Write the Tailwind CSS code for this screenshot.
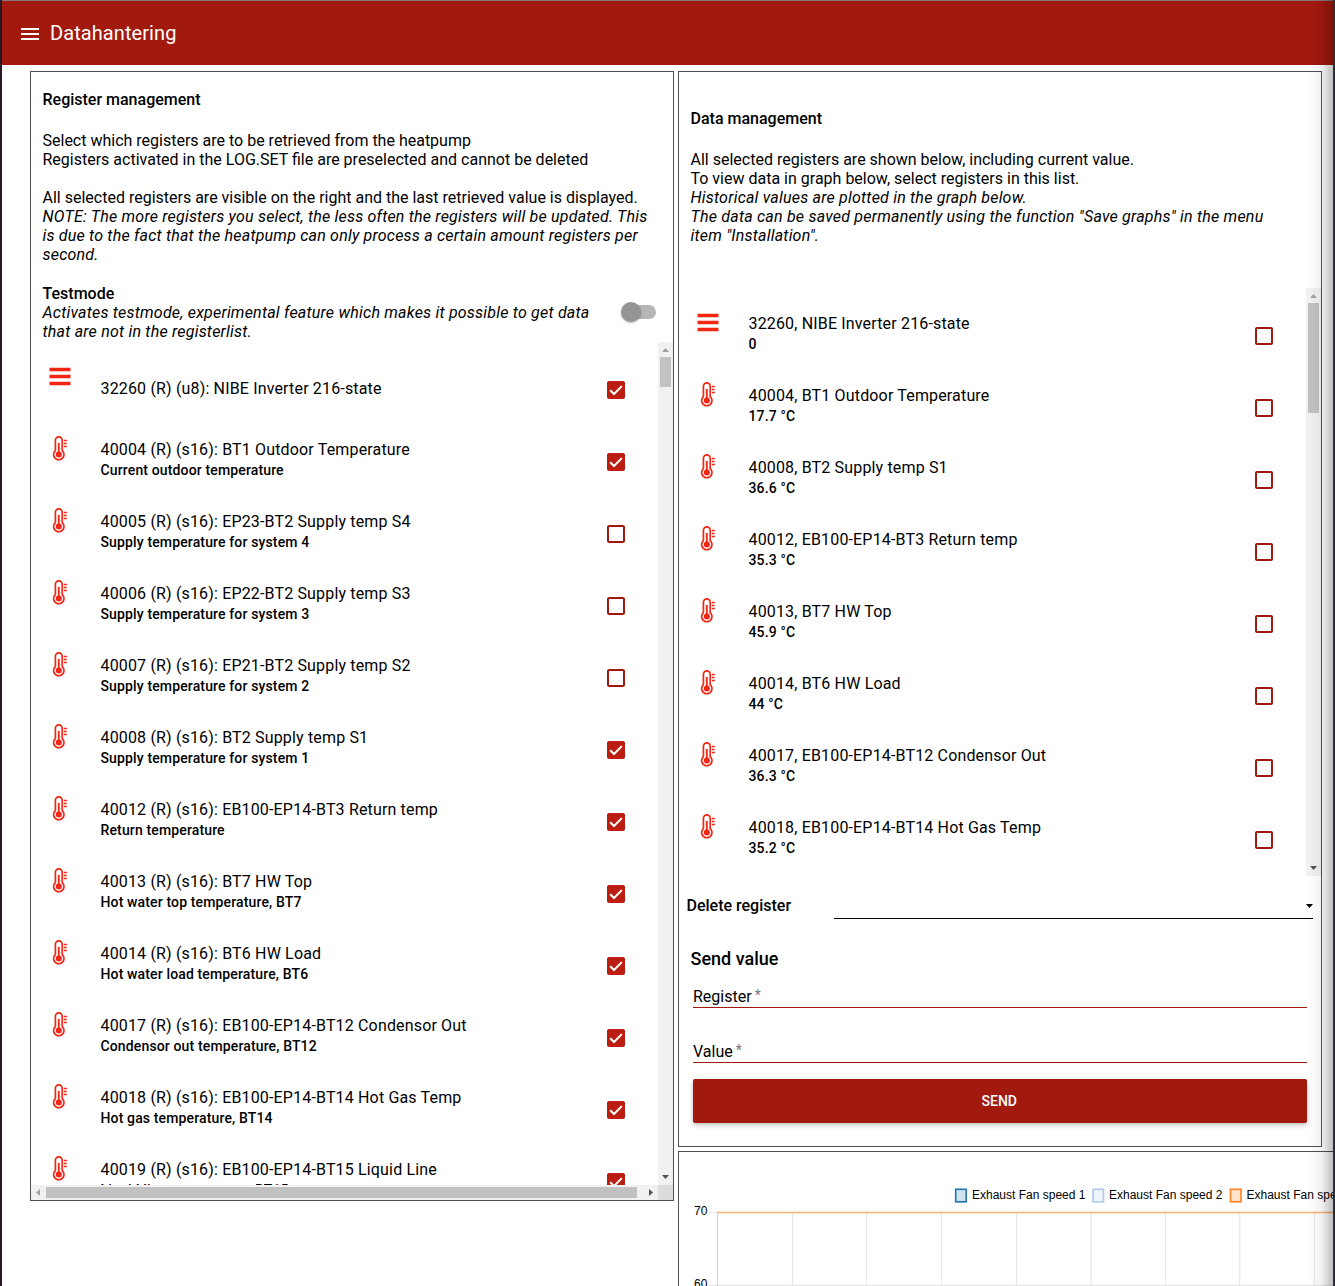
<!DOCTYPE html>
<html lang="sv">
<head>
<meta charset="utf-8">
<title>Datahantering</title>
<script src="https://cdn.jsdelivr.net/npm/@tailwindcss/browser@4"></script>
</head>
<body class="bg-white">
<svg class="hidden">
  <symbol id="bars" viewBox="0 0 24 24"><path fill="#f22613" d="M1.500 3.700h21v3.500h-21zM1.500 10.700h21v3.500h-21zM1.500 17.700h21v3.500h-21z"/></symbol>
  <symbol id="thermo" viewBox="0 0 24 25">
    <path fill="none" stroke="#f22613" stroke-width="1.700" d="M7.400 14.600V4.200a3.400 3.400 0 0 1 6.800 0V14.600a5.200 5.200 0 1 1-6.800 0z"/>
    <path stroke="#f22613" stroke-width="1.800" d="M10.800 7v11"/>
    <circle cx="10.800" cy="18.600" r="3" fill="#f22613"/>
    <path stroke="#f22613" stroke-width="1.300" d="M15.900 4.500h3M15.900 7.500h2.700M15.900 10.500h3"/>
  </symbol>
</svg>
<div class="relative flex h-[1286px] w-[1335px] flex-col overflow-hidden border-r-2 border-l-2 border-r-[#2e2d35] border-l-[#2c1524] bg-white font-['Roboto',sans-serif] text-base leading-[19px] text-black">
  <header class="flex h-[65px] shrink-0 items-center border-t border-[#84757a] bg-[#a2190e] pl-[19px] text-white">
    <svg class="mt-[2px] h-[12px] w-[18px]" viewBox="0 0 18 12"><path fill="#fff" d="M0 0h18v2H0zM0 5h18v2H0zM0 10h18v2H0z"/></svg>
    <h1 class="ml-[11px] text-[20px] leading-6 tracking-[0.08px]">Datahantering</h1>
  </header>

  <main class="flex w-[1400px] items-start gap-1 pt-[6px] pl-[28px]">
    <section class="flex h-[1130px] w-[644px] shrink-0 flex-col border border-[#505050]">
      <div class="h-[270px] shrink-0 pt-[18px] pl-[11.5px]">
        <h2 class="font-medium">Register management</h2>
        <p class="mt-[22px] whitespace-nowrap">Select which registers are to be retrieved from the heatpump<br>Registers activated in the LOG.SET file are preselected and cannot be deleted<br><br>All selected registers are visible on the right and the last retrieved value is displayed.<br><em class="tracking-[0.2px]">NOTE: The more registers you select, the less often the registers will be updated. This<br>is due to the fact that the heatpump can only process a certain amount registers per<br>second.</em></p>
        <div class="mt-5 flex">
          <div class="w-[578.5px] whitespace-nowrap"><h2 class="font-medium">Testmode</h2><p class="tracking-[0.21px] italic">Activates testmode, experimental feature which makes it possible to get data<br>that are not in the registerlist.</p></div>
          <div class="mt-[18px] flex h-5 w-[36px] items-center">
            <div class="z-10 size-5 shrink-0 rounded-full bg-[#949494] shadow-[0_1px_2px_rgba(0,0,0,0.3)]"></div>
            <div class="-ml-[17px] h-[14px] w-[32px] rounded-full bg-[#b6b6b6]"></div>
          </div>
        </div>
      </div>
      <div class="flex h-[843px] shrink-0">
        <div id="registers" class="w-[627px] overflow-hidden pt-3"></div>
        <div class="flex w-[15px] flex-col items-center bg-[#f1f1f1]">
          <svg class="size-[15px] shrink-0" viewBox="0 0 15 15"><path fill="#a3a3a3" d="M4 10h7L7.5 6z"/></svg>
          <div class="h-[30px] w-[11px] bg-[#c1c1c1]"></div>
          <svg class="mt-auto size-[15px] shrink-0" viewBox="0 0 15 15"><path fill="#505050" d="M4 5h7L7.5 9z"/></svg>
        </div>
      </div>
      <div class="flex h-[15px] items-center bg-[#f1f1f1]">
        <svg class="size-[15px] shrink-0" viewBox="0 0 15 15"><path fill="#a3a3a3" d="M9 4v7L5 7.5z"/></svg>
        <div class="h-[11px] w-[591px] bg-[#c1c1c1]"></div>
        <svg class="ml-[6px] size-[15px] shrink-0" viewBox="0 0 15 15"><path fill="#505050" d="M6 4v7l4-3.500z"/></svg>
        <div class="size-[15px] bg-[#dcdcdc]"></div>
      </div>
    </section>

    <div class="flex flex-col gap-1">
      <section class="h-[1076px] w-[644px] border border-[#505050]">
        <div class="h-[216px] pt-[37px] pl-[11.5px] whitespace-nowrap">
          <h2 class="font-medium">Data management</h2>
          <p class="mt-[22px]">All selected registers are shown below, including current value.<br>To view data in graph below, select registers in this list.<br><em class="tracking-[0.21px]">Historical values are plotted in the graph below.<br>The data can be saved permanently using the function "Save graphs" in the menu<br>item "Installation".</em></p>
        </div>
        <div class="flex h-[588px]">
          <div id="values" class="w-[627px] overflow-hidden pt-3"></div>
          <div class="flex w-[15px] flex-col items-center bg-[#f1f1f1]">
            <svg class="size-[15px] shrink-0" viewBox="0 0 15 15"><path fill="#a3a3a3" d="M4 10h7L7.5 6z"/></svg>
            <div class="h-[110px] w-[11px] bg-[#c1c1c1]"></div>
            <svg class="mt-auto size-[15px] shrink-0" viewBox="0 0 15 15"><path fill="#505050" d="M4 5h7L7.5 9z"/></svg>
          </div>
        </div>
        <div class="flex h-[43px] pt-5 pl-[7.5px]">
          <h2 class="w-[147.5px] font-medium">Delete register</h2>
          <div class="flex h-[23px] w-[479px] justify-end border-b border-black">
            <svg class="mt-[8px] h-1 w-[7px]" viewBox="0 0 7 4"><path d="M0 0h7L3.500 4z"/></svg>
          </div>
        </div>
        <div class="w-[628px] pt-[29px] pl-[14px]">
          <h2 class="-ml-[2.5px] text-[18px] leading-[21px] font-medium">Send value</h2>
          <div class="mt-[18px] flex h-[21px] border-b border-[#a2190e]">Register<span class="ml-[3px] text-sm leading-[17px] text-[#777]">*</span></div>
          <div class="mt-[34px] flex h-[21px] border-b border-[#a2190e]">Value<span class="ml-[3px] text-sm leading-[17px] text-[#777]">*</span></div>
          <button class="mt-4 flex h-11 w-full items-center justify-center rounded-[2px] bg-[#a2190e] pr-[1.5px] text-sm font-medium text-white shadow-[0_2px_5px_rgba(0,0,0,0.26)]">SEND</button>
        </div>
      </section>
      <section class="h-[200px] w-[720px] border border-[#505050]">
        <svg class="block h-[190px] w-[718px] font-['Liberation_Sans',sans-serif] text-xs" viewBox="679 1152 718 190">
          <path stroke="#e9e9e9" stroke-width="1.3" d="M709 1212.500h9M709 1285.500h688M792.500 1212v90M866.500 1212v90M941.500 1212v90M1016.500 1212v90M1091 1212v90M1165.500 1212v90M1239.700 1212v90M1314.500 1212v90"/>
          <path stroke="#d6d6d6" stroke-width="1.3" d="M717.500 1212v90"/>
          <path stroke="#fdb076" stroke-width="1.6" d="M717 1212.500h680"/>
          <text x="694" y="1215">70</text><text x="694" y="1288">60</text>
          <rect x="955.700" y="1189.300" width="10.500" height="12.500" fill="#d2e4f0" stroke="#2b79b3" stroke-width="1.7"/>
          <rect x="1093" y="1189.300" width="10.500" height="12.500" fill="#eff4fb" stroke="#b3c9e8" stroke-width="1.7"/>
          <rect x="1230.500" y="1189.300" width="10.500" height="12.500" fill="#ffe5cf" stroke="#ff872a" stroke-width="1.700"/>
          <text x="972" y="1199">Exhaust Fan speed 1</text><text x="1109" y="1199">Exhaust Fan speed 2</text><text x="1246.500" y="1199">Exhaust Fan speed 3</text>
        </svg>
      </section>
    </div>
  </main>
  <div class="pointer-events-none absolute top-0 right-0 h-full w-[24px] bg-linear-to-r from-black/0 via-black/5 to-black/25"></div>
</div>
<script>
const registers = [
  ['32260 (R) (u8): NIBE Inverter 216-state', '', 1],
  ['40004 (R) (s16): BT1 Outdoor Temperature', 'Current outdoor temperature', 1],
  ['40005 (R) (s16): EP23-BT2 Supply temp S4', 'Supply temperature for system 4', 0],
  ['40006 (R) (s16): EP22-BT2 Supply temp S3', 'Supply temperature for system 3', 0],
  ['40007 (R) (s16): EP21-BT2 Supply temp S2', 'Supply temperature for system 2', 0],
  ['40008 (R) (s16): BT2 Supply temp S1', 'Supply temperature for system 1', 1],
  ['40012 (R) (s16): EB100-EP14-BT3 Return temp', 'Return temperature', 1],
  ['40013 (R) (s16): BT7 HW Top', 'Hot water top temperature, BT7', 1],
  ['40014 (R) (s16): BT6 HW Load', 'Hot water load temperature, BT6', 1],
  ['40017 (R) (s16): EB100-EP14-BT12 Condensor Out', 'Condensor out temperature, BT12', 1],
  ['40018 (R) (s16): EB100-EP14-BT14 Hot Gas Temp', 'Hot gas temperature, BT14', 1],
  ['40019 (R) (s16): EB100-EP14-BT15 Liquid Line', 'Liquid line temperature, BT15', 1]
];
const values = [
  ['32260, NIBE Inverter 216-state', '0', 0],
  ['40004, BT1 Outdoor Temperature', '17.7 °C', 0],
  ['40008, BT2 Supply temp S1', '36.6 °C', 0],
  ['40012, EB100-EP14-BT3 Return temp', '35.3 °C', 0],
  ['40013, BT7 HW Top', '45.9 °C', 0],
  ['40014, BT6 HW Load', '44 °C', 0],
  ['40017, EB100-EP14-BT12 Condensor Out', '36.3 °C', 0],
  ['40018, EB100-EP14-BT14 Hot Gas Temp', '35.2 °C', 0]
];
const on = '<div class="mt-[27px] size-[18px] rounded-[2px] bg-[#bb1e12]"><svg class="size-[18px]" viewBox="0 0 18 18"><path fill="none" stroke="#fff" stroke-width="2" d="M3.200 9.200l3.800 3.800 7.800-7.900"/></svg></div>';
const off = '<div class="mt-[27px] size-[18px] rounded-[2px] border-2 border-[#a2190e]"></div>';
const row = ([title, sub, checked], i) => `<div class="flex h-[72px] pl-[17px]">
  <svg class="mt-[10px] w-6 shrink-0 ${i ? 'h-[25px]' : 'h-6'}"><use href="#${i ? 'thermo' : 'bars'}"/></svg>
  <div class="ml-[28.5px] w-[506.5px] whitespace-nowrap ${sub ? 'pt-[14px]' : 'pt-[25px]'}"><div class="tracking-[0.01em]">${title}</div><div class="mt-[1px] text-sm leading-5 font-medium tracking-[0.01em]">${sub}</div></div>
  ${checked ? on : off}</div>`;
document.getElementById('registers').innerHTML = registers.map(row).join('');
document.getElementById('values').innerHTML = values.map(row).join('');
</script>
</body>
</html>
